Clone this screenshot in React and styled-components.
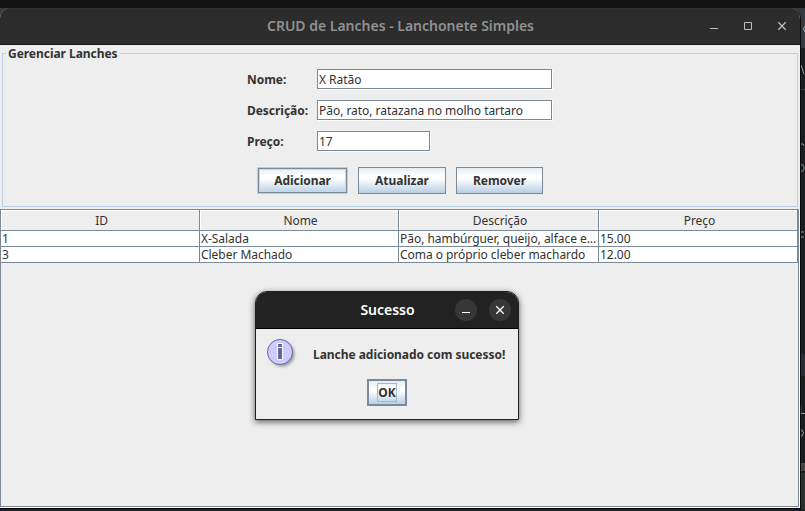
import React from "react";
import styled, { createGlobalStyle, css } from "styled-components";

const line = "#7a8a99";
const pale = "#b8cfe5";

const GlobalStyle = createGlobalStyle`
  * { box-sizing: border-box; }
  body { margin: 0; overflow: hidden; background: #1b1d1f; }
  button, input { font: inherit; color: inherit; letter-spacing: inherit; }
`;

const Desktop = styled.div`
  position: relative;
  width: 805px;
  height: 511px;
  overflow: hidden;
  display: grid;
  grid-template: 8px 501px 2px / 801px 4px;
  background: #1a1c1d;
  color: #333;
  font: 12px/16px "Noto Sans", "Open Sans", sans-serif;
  letter-spacing: -0.04px;
`;
const TopStrip = styled.div`
  grid-column: 1 / 3;
  background: #131313;
`;
const BottomStrip = styled.div`
  grid-column: 1 / 3;
  background: #222226;
`;
const Backdrop = styled.svg`
  display: block;
  width: 4px;
  height: 501px;
`;
const WindowCorner = styled.div`
  background: linear-gradient(#343a3e 0 20px, #0b0b0c 20px);
`;
const Window = styled.main`
  width: 801px;
  height: 501px;
  display: grid;
  grid-template-rows: 37px 463px;
  border-right: 1px solid #090909;
  border-bottom: 1px solid #000;
  border-radius: 10px 11px 0 0;
  overflow: hidden;
  background: #eee;
`;
const TitleBar = styled.header`
  display: grid;
  grid-template-columns: 1fr auto;
  background: #2c2c2c;
  border-bottom: 1px solid #151515;
  box-shadow: inset 0 1px #303030;
`;
const Title = styled.h1`
  margin: 0;
  padding: 0 0 1px 104px;
  display: flex;
  align-items: center;
  justify-content: center;
  color: #919191;
  font: 600 14px/20px "Noto Sans", sans-serif;
  letter-spacing: -0.01px;
`;
const WindowIcons = styled.svg`
  width: 103px;
  height: 36px;
  fill: none;
  stroke: #bdbdbd;
`;
const Content = styled.div`
  display: grid;
  grid-template-rows: 164px 299px;
`;
const FormSection = styled.section`
  height: 164px;
  display: flow-root;
`;
const FormPanel = styled.fieldset`
  margin: 0 2px;
  padding: 0;
  width: 796px;
  height: 162px;
  border: 1px solid ${pale};
  min-width: 0;
`;
const Legend = styled.legend`
  margin-left: 3px;
  padding: 1px 2px 0;
  height: 16px;
  font-weight: 700;
  line-height: 16px;
  width: 114px;
  white-space: nowrap;
`;
const Form = styled.form`
  margin: 8px 0 0 244px;
  display: grid;
  grid-template-columns: 70px 236px;
  grid-auto-rows: 21px;
  row-gap: 10px;
`;
const Label = styled.label`
  font-weight: 700;
  line-height: 21px;
  white-space: nowrap;
`;
const Field = styled.input`
  width: ${(p) => p.$width}px;
  height: 20px;
  padding: 0 1px;
  border: 1px solid ${line};
  border-radius: 0;
  outline: 0;
  background: #fff;
  box-shadow: 1px 1px #fff;
`;
const Actions = styled.div`
  display: flex;
  gap: 10px;
  margin: 15px 0 0 254px;
`;
const Button = styled.button`
  width: ${(p) => p.$width}px;
  height: 27px;
  padding: 0;
  border: 1px solid ${line};
  border-radius: 0;
  background: linear-gradient(#e3edf6 0, #fff 32%, #fff 42%, #b8cfe5 100%);
  font-weight: 700;
  line-height: 23px;
  ${(p) => p.$active && css`
    border-color: ${pale};
    box-shadow: inset 0 0 0 1px ${line}, inset 0 0 0 2px #c4d9ec;
  `}
  ${(p) => p.$default && css`
    border-width: 2px;
  `}
`;
const Focus = styled.span`
  display: inline-block;
  width: 20px;
  height: 19px;
  border: 1px solid #a3b8cc;
  line-height: 17px;
  vertical-align: top;
  margin-top: 2px;
`;
const TablePane = styled.div`
  width: 799px;
  height: 298px;
  border: 1px solid ${line};
  box-shadow: 1px 1px #fff;
`;
const Table = styled.div`
  display: grid;
  grid-template-columns: 199px 199px 200px 199px;
`;
const HeaderCell = styled.div`
  height: 21px;
  border-right: 1px solid ${line};
  border-bottom: 1px solid ${line};
  box-shadow: inset 1px 1px #fff;
  text-align: center;
  line-height: 21px;
  padding-left: 3px;
`;
const Cell = styled.div`
  height: 16px;
  padding-left: 1px;
  border-right: 1px solid ${line};
  border-bottom: 1px solid ${line};
  background: #fff;
  line-height: 15px;
  white-space: nowrap;
  overflow: hidden;
`;
const Dialog = styled.section`
  position: absolute;
  left: 255px;
  top: 291px;
  width: 264px;
  height: 129px;
  border: 1px solid #202020;
  border-radius: 12px 12px 0 0;
  overflow: hidden;
  background: #eee;
  box-shadow: 0 2px 6px rgba(0, 0, 0, 0.62);
`;
const DialogBar = styled.header`
  height: 37px;
  display: grid;
  grid-template-columns: 1fr 64px;
  background: #222;
  border-bottom: 1px solid #000;
`;
const DialogTitle = styled(Title)`
  color: #fff;
  padding-left: 65px;
`;
const DialogIcons = styled.svg`
  width: 64px;
  height: 36px;
  fill: none;
  stroke: #fff;
`;
const DialogBody = styled.div`
  display: grid;
  grid-template-columns: 57px 1fr;
  grid-template-rows: 50px 27px;
`;
const InfoIcon = styled.svg`
  width: 36px;
  height: 38px;
  margin: 7px 0 0 8px;
`;
const Message = styled.p`
  margin: 18px 0 0;
  font-weight: 700;
  white-space: nowrap;
`;
const DialogAction = styled.div`
  grid-column: 1 / 3;
  display: flex;
  justify-content: center;
`;

const fields = [
  ["Nome:", "X Ratão", 235],
  ["Descrição:", "Pão, rato, ratazana no molho tartaro", 235],
  ["Preço:", "17", 113],
];
const columns = ["ID", "Nome", "Descrição", "Preço"];
const rows = [
  ["1", "X-Salada", "Pão, hambúrguer, queijo, alface e...", "15.00"],
  ["3", "Cleber Machado", "Coma o próprio cleber machardo", "12.00"],
];

function LancheForm() {
  return (
    <FormPanel>
      <Legend>Gerenciar Lanches</Legend>
      <Form>
        {fields.map(([label, value, width], i) => (
          <React.Fragment key={label}>
            <Label htmlFor={`field-${i}`}>{label}</Label>
            <Field id={`field-${i}`} $width={width} defaultValue={value} />
          </React.Fragment>
        ))}
      </Form>
      <Actions>
        <Button $width={91} $active>Adicionar</Button>
        <Button $width={88}>Atualizar</Button>
        <Button $width={87}>Remover</Button>
      </Actions>
    </FormPanel>
  );
}

export default function App() {
  return (
    <>
      <GlobalStyle />
      <Desktop>
        <TopStrip />
        <WindowCorner>
          <Window>
            <TitleBar>
              <Title>CRUD de Lanches - Lanchonete Simples</Title>
              <WindowIcons viewBox="0 0 103 36">
                <path d="M13 20.5h8M47.5 14.5h7v7h-7z" />
                <path d="m81.3 14.3 7.4 7.4m0-7.4-7.4 7.4" strokeWidth="1.3" />
              </WindowIcons>
            </TitleBar>
            <Content>
              <FormSection>
                <LancheForm />
              </FormSection>
              <TablePane>
                <Table>
                  {columns.map((c) => <HeaderCell key={c}>{c}</HeaderCell>)}
                  {rows.flat().map((c, i) => <Cell key={i}>{c}</Cell>)}
                </Table>
              </TablePane>
            </Content>
          </Window>
        </WindowCorner>
        <Backdrop viewBox="0 0 4 501" fill="none">
          <path fill="#343a3e" d="M0 0h4v40H0z" />
          <path stroke="#3a3d3f" d="M0 81.5h4M0 366.5h4" />
          <path fill="#292b30" d="M0 346h4v22H0z" />
          <path fill="#454545" d="M0 455h4v8H0z" />
          <path fill="#29302e" d="M0 465h4v36H0z" />
          <path stroke="#8ba9c4" d="M4 18q-3 3 0 6" />
          <path stroke="#879daa" d="m0 57 3 9M0 136h2q1 0 1 2M0 157q3-1 3 3t-3 3" />
          <path stroke="#999" d="M0 224h3M0 229h3M0 405.5h4" />
          <path stroke="#59281e" d="M.5 397v8" />
          <path stroke="#8d9eb0" d="M0 422h1q3 3 0 6H0" />
        </Backdrop>
        <BottomStrip />
        <Dialog role="dialog">
          <DialogBar>
            <DialogTitle as="h2">Sucesso</DialogTitle>
            <DialogIcons viewBox="0 0 64 36">
              <circle cx="12" cy="18" r="11" fill="#373737" stroke="none" />
              <circle cx="46" cy="18" r="11" fill="#373737" stroke="none" />
              <path d="M8 20.5h8" />
              <path d="m42.3 14.3 7.4 7.4m0-7.4-7.4 7.4" strokeWidth="1.3" />
            </DialogIcons>
          </DialogBar>
          <DialogBody>
            <InfoIcon viewBox="0 0 36 38">
              <defs>
                <filter id="soft" x="-30%" y="-30%" width="160%" height="160%">
                  <feGaussianBlur stdDeviation="1.4" />
                </filter>
              </defs>
              <circle cx="18" cy="18" r="12.5" fill="#999" filter="url(#soft)" />
              <circle cx="16" cy="16" r="12.5" fill="#ccf" stroke="#669" />
              <path fill="#fff" d="M13 7h6v5h-6zM13 11h6v13h-6z" />
              <path fill="#669" d="M14 8h4v3h-4zM14 12h4v11h-4z" />
            </InfoIcon>
            <Message>Lanche adicionado com sucesso!</Message>
            <DialogAction>
              <Button $width={40} $default><Focus>OK</Focus></Button>
            </DialogAction>
          </DialogBody>
        </Dialog>
      </Desktop>
    </>
  );
}
